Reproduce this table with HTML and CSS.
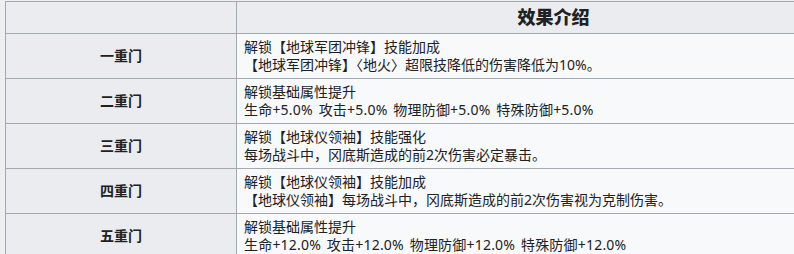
FILE: index.html
```html
<!DOCTYPE html>
<html lang="zh">
<head>
<meta charset="utf-8">
<link rel="stylesheet" href="styles.css">
</head>
<body>
<div class="page">
<table class="wikitable">
  <colgroup><col class="c1"><col class="c2"></colgroup>
  <thead>
    <tr><th class="empty"></th><th class="hd">效果介绍</th></tr>
  </thead>
  <tbody>
    <tr><th>一重门</th><td>解锁【地球军团冲锋】技能加成<br>【地球军团冲锋】〈地火〉超限技降低的伤害降低为10%。</td></tr>
    <tr><th>二重门</th><td>解锁基础属性提升<br><span class="stats">生命+5.0% 攻击+5.0% 物理防御+5.0% 特殊防御+5.0%</span></td></tr>
    <tr><th>三重门</th><td>解锁【地球仪领袖】技能强化<br>每场战斗中，冈底斯造成的前2次伤害必定暴击。</td></tr>
    <tr><th>四重门</th><td>解锁【地球仪领袖】技能加成<br>【地球仪领袖】每场战斗中，冈底斯造成的前2次伤害视为克制伤害。</td></tr>
    <tr><th>五重门</th><td>解锁基础属性提升<br><span class="stats">生命+12.0% 攻击+12.0% 物理防御+12.0% 特殊防御+12.0%</span></td></tr>
  </tbody>
</table>
</div>
</body>
</html>
```
FILE: styles.css
```css
html, body {
  margin: 0;
  padding: 0;
  background: #efefef;
  overflow: hidden;
}
.page {
  padding: 1px 0 0 5px;
  width: 900px;
}
.wikitable {
  border-collapse: collapse;
  width: 866px;
  table-layout: fixed;
  background: #f8f9fa;
  color: #202122;
  font-family: "Noto Sans", "Noto Sans CJK SC", sans-serif;
  font-size: 14px;
  line-height: 18px;
}
.c1 { width: 231px; }
.wikitable th, .wikitable td {
  border: 1px solid #a2a9b1;
  padding: 4px 7px;
  vertical-align: middle;
}
.wikitable th {
  background: #eaecf0;
  font-weight: bold;
  text-align: center;
}
.wikitable td {
  text-align: left;
}
.wikitable thead th {
  height: 23px;
  font-size: 18px;
  line-height: 23px;
  font-weight: 900;
}
.stats {
  word-spacing: 2px;
  letter-spacing: 0.2px;
}
```
